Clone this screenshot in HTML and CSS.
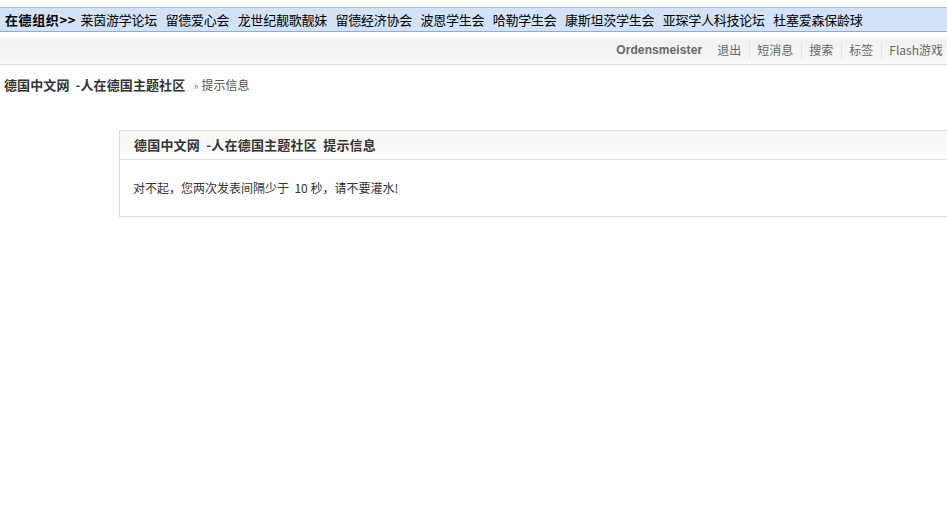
FILE: index.html
```html
<!DOCTYPE html>
<html lang="zh">
<head>
<meta charset="utf-8">
<title>提示信息 - 德国中文网</title>
<link rel="stylesheet" href="styles.css">
</head>
<body>
<div class="orgbar">
  <b class="org-title">在德组织&gt;&gt;</b>
  <a>莱茵游学论坛</a>
  <a>留德爱心会</a>
  <a>龙世纪靓歌靓妹</a>
  <a>留德经济协会</a>
  <a>波恩学生会</a>
  <a>哈勒学生会</a>
  <a>康斯坦茨学生会</a>
  <a>亚琛学人科技论坛</a>
  <a>杜塞爱森保龄球</a>
</div>
<div class="header">
  <ul class="usernav">
    <li class="user">Ordensmeister</li>
    <li>退出</li>
    <li class="sep">短消息</li>
    <li class="sep">搜索</li>
    <li class="sep">标签</li>
    <li class="sep">Flash游戏</li>
  </ul>
</div>
<div class="breadcrumb"><b>德国中文网 &nbsp;-人在德国主题社区</b> <span class="raquo">»</span> <span class="current">提示信息</span></div>
<div class="box">
  <h1 class="box-head">德国中文网 &nbsp;-人在德国主题社区 &nbsp;提示信息</h1>
  <div class="box-body">对不起，您两次发表间隔少于 &nbsp;10 秒，请不要灌水!</div>
</div>
</body>
</html>
```
FILE: styles.css
```css
html, body {
  margin: 0;
  padding: 0;
  background: #fff;
}
body {
  font-family: "Noto Sans CJK SC", "Liberation Sans", sans-serif;
  font-size: 12px;
  color: #333;
}
.orgbar {
  margin-top: 7px;
  height: 23px;
  line-height: 23px;
  background: #d2e2f7;
  border-top: 1px solid #a9bfe0;
  border-bottom: 1px solid #93abd3;
  padding-left: 5px;
  font-size: 13px;
  color: #000;
  white-space: nowrap;
  overflow: hidden;
  display: flex;
  gap: 8.5px;
}
.org-title {
  font-weight: bold;
  margin-right: -4px;
  letter-spacing: 0.6px;
}
.orgbar a {
  color: #000;
  letter-spacing: -0.25px;
}
.header {
  margin-top: 1px;
  height: 31px;
  border-bottom: 1px solid #dedede;
  background: linear-gradient(#ffffff 0px, #ffffff 3px, #f1f1f1 8px, #f6f6f6 24px, #fbfbfb 31px);
  display: flex;
  justify-content: flex-end;
}
.usernav {
  list-style: none;
  margin: 0;
  padding: 2px 4px 0 0;
  display: flex;
  align-items: center;
  font-size: 12px;
  color: #666;
}
.usernav li {
  padding: 0 8px 0 7px;
  line-height: 16px;
}
.usernav li.sep {
  border-left: 1px solid #e2e2e2;
}
.usernav li:last-child {
  padding-right: 0;
}
.usernav .user {
  font-family: "Liberation Sans", sans-serif;
  font-weight: bold;
  font-size: 12px;
  letter-spacing: 0.1px;
  padding-right: 8px;
}
.breadcrumb {
  margin: 10px 0 0 4px;
  height: 20px;
  line-height: 20px;
  font-size: 13px;
  color: #555;
}
.breadcrumb b {
  color: #333;
  letter-spacing: 0.1px;
}
.raquo {
  color: #888;
  font-size: 11px;
  margin: 0 0 0 5px;
}
.current {
  font-size: 12px;
}
.box {
  margin: 35px 0 0 119px;
  border: 1px solid #dcdcdc;
  border-right: none;
}
.box-head {
  margin: 0;
  height: 28px;
  line-height: 28px;
  padding-left: 14px;
  font-size: 13px;
  font-weight: bold;
  color: #333;
  letter-spacing: 0.2px;
  background: linear-gradient(#f7f7f4, #fdfdfc);
  border-bottom: 1px solid #dedede;
}
.box-body {
  padding: 18px 13px 18px;
  line-height: 20px;
  font-size: 12px;
  color: #333;
}
```
